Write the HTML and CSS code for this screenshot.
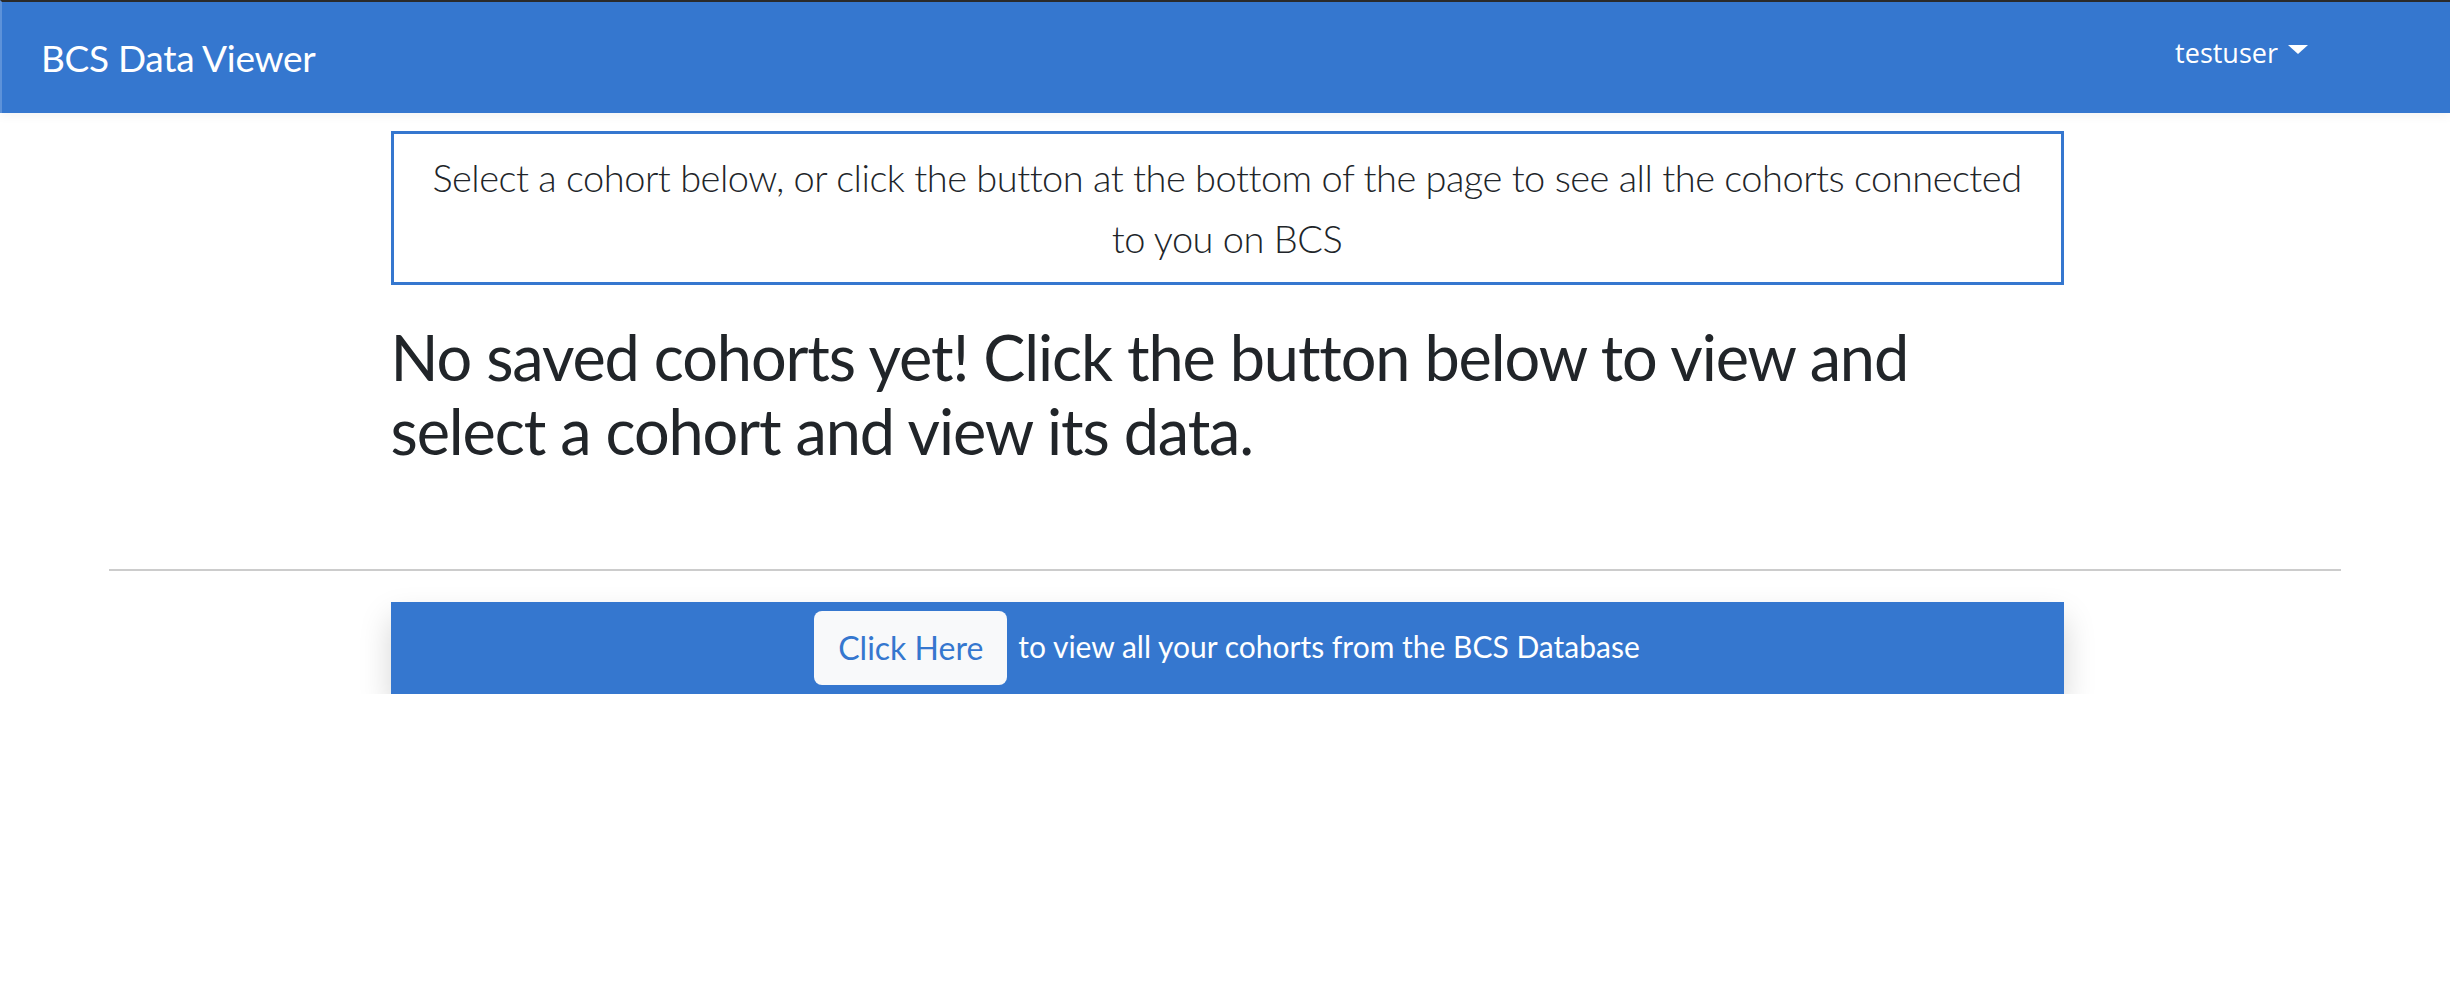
FILE: index.html
```html
<!DOCTYPE html>
<html lang="en">
<head>
<meta charset="utf-8">
<title>BCS Data Viewer</title>
<link rel="stylesheet" href="styles.css">
</head>
<body>
<nav class="navbar">
  <a class="brand" href="#">BCS Data Viewer</a>
  <div class="user">testuser <span class="caret"></span></div>
</nav>
<main class="content">
  <div class="intro">
    <p class="lead">Select a cohort below, or click the button at the bottom of the page to see all the cohorts connected to you on BCS</p>
  </div>
  <h2 class="empty">No saved cohorts yet! Click the button below to view and select a cohort and view its data.</h2>
</main>
<hr class="divider">
<div class="content">
  <div class="cta">
    <button class="btn-light">Click Here</button>
    <span class="cta-text">to view all your cohorts from the BCS Database</span>
  </div>
</div>
</body>
</html>
```
FILE: styles.css
```css
html, body {
  margin: 0;
  padding: 0;
  background: #ffffff;
}
body {
  font-family: Lato, "Open Sans", sans-serif;
  color: #212529;
}
.navbar {
  height: 111px;
  border-top: 2px solid #2a2a2a;
  border-left: 2px solid #5d92d9;
  background: #3577cf;
  display: flex;
  align-items: center;
  justify-content: space-between;
  padding: 0 142px 0 39px;
  box-shadow: 0 3px 10px rgba(0,0,0,0.05);
}
.brand {
  color: #ffffff;
  text-decoration: none;
  font-size: 37px;
  font-weight: 400;
  letter-spacing: -0.3px;
}
.user {
  color: #ffffff;
  font-family: "Open Sans", sans-serif;
  font-size: 27px;
  display: flex;
  align-items: center;
  gap: 10px;
  margin-top: -10px;
}
.caret {
  width: 0;
  height: 0;
  border-left: 10px solid transparent;
  border-right: 10px solid transparent;
  border-top: 9px solid #ffffff;
  margin-top: -6px;
}
.content {
  width: 1673px;
  margin: 0 auto;
  position: relative;
  left: 2px;
}
.intro {
  margin-top: 18px;
  border: 3px solid #3577cf;
  padding: 13px 28px;
  text-align: center;
}
.lead {
  margin: 0;
  font-size: 38px;
  font-weight: 300;
  line-height: 61px;
  letter-spacing: -0.5px;
}
.empty {
  margin: 35px 0 0 0;
  width: 1560px;
  font-size: 63px;
  font-weight: 400;
  line-height: 74px;
  letter-spacing: -1.1px;
}
.divider {
  margin: 101px 109px 0 109px;
  border: 0;
  border-top: 2px solid #cccccc;
}
.cta {
  margin-top: 31px;
  background: #3577cf;
  padding: 9px;
  display: flex;
  align-items: center;
  justify-content: center;
  gap: 11px;
  box-shadow: 0 16px 32px rgba(0,0,0,0.17);
}
.btn-light {
  background: #f8f9fa;
  color: #3577cf;
  border: 0;
  border-radius: 8px;
  font-family: Lato, sans-serif;
  font-size: 32px;
  line-height: 48px;
  padding: 13px 24px;
}
.cta-text {
  color: #ffffff;
  font-size: 30px;
  margin-top: -4px;
}
```
